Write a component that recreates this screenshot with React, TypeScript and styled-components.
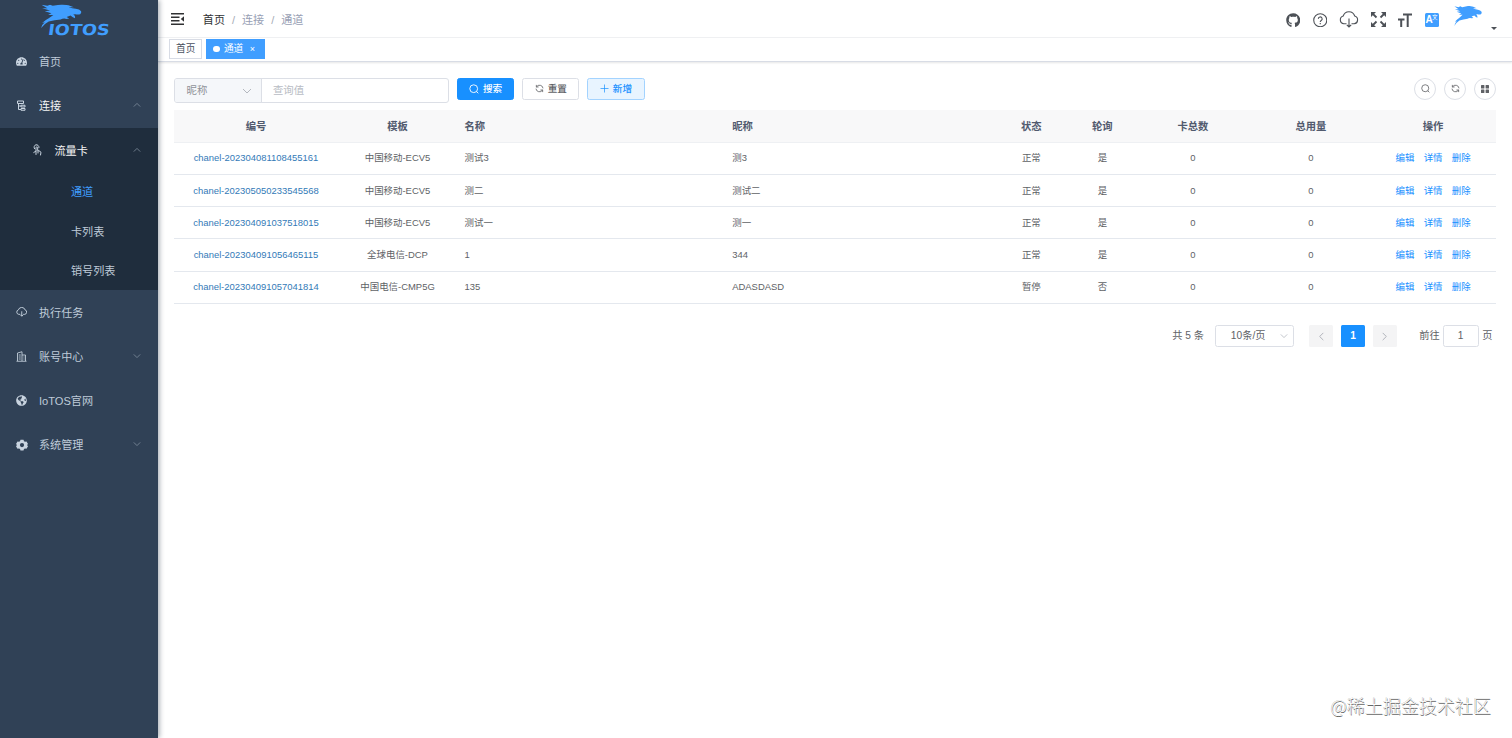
import React from 'react';
import styled, { createGlobalStyle, css } from 'styled-components';
import { FaGithub, FaTachometerAlt, FaGlobeAmericas } from 'react-icons/fa';

const GlobalStyle = createGlobalStyle`
  * { box-sizing: border-box; }
  html, body, #root { height: 100%; }
  body {
    margin: 0;
    overflow: hidden;
    background: #fff;
    color: #606266;
    font-family: "Liberation Sans", "Noto Sans CJK SC", sans-serif;
    font-size: 10.2px;
  }
  svg { display: block; flex: none; }
`;

const Page = styled.div`
  position: relative;
  display: flex;
  width: 100%;
  height: 738px;
`;

const Sidebar = styled.aside`
  position: relative;
  z-index: 1;
  flex: none;
  width: 157.5px;
  background: #304156;
  box-shadow: 1.5px 0 5px rgba(0, 21, 41, 0.35);
`;

const LogoBar = styled.div`
  height: 39.4px;
  padding: 3.5px 0 0 40px;
`;

const itemColor = { normal: '#bfcbd9', open: '#f4f4f5', active: '#409eff' };
type Tone = keyof typeof itemColor;

const MenuItem = styled.div<{ $level?: number; $tone?: Tone }>`
  display: flex;
  align-items: center;
  height: ${p => (p.$level === 2 ? '39.4px' : '44.1px')};
  padding: 1.8px 17px 0 ${p => [15.5, 31, 71][p.$level ?? 0]}px;
  color: ${p => itemColor[p.$tone ?? 'normal']};
  font-size: 11.1px;
  line-height: 16px;
`;

const MenuIcon = styled.span`
  display: flex;
  justify-content: center;
  width: 12px;
  margin: 0 11.5px 1px 0;
  color: #c9d4e0;
`;

const MenuArrow = styled.span`
  margin-left: auto;
  margin-bottom: 2px;
  color: #8290a0;
`;

const SubMenu = styled.div`
  background: #1f2d3d;
`;

const Main = styled.main`
  flex: 1;
  min-width: 0;
  display: flex;
  flex-direction: column;
`;

const Navbar = styled.header`
  display: flex;
  align-items: center;
  flex: none;
  height: 37.5px;
  padding: 2px 15.5px 0 13px;
  border-bottom: 1px solid #f0f1f3;
  color: #4d5157;
`;

const Breadcrumb = styled.nav`
  display: flex;
  margin: 1.4px 0 0 19.3px;
  font-size: 11.1px;
  line-height: 16px;
`;

const Crumb = styled.span<{ $link?: boolean }>`
  color: ${p => (p.$link ? '#303133' : '#97a0b4')};
`;

const Slash = styled.span`
  width: 17px;
  text-align: center;
  color: #a5abb5;
`;

const NavTools = styled.div`
  display: flex;
  align-items: center;
  margin: 1px 0 0 auto;
`;

const Tool = styled.span<{ $w: number }>`
  display: flex;
  justify-content: center;
  width: ${p => p.$w}px;
`;

const LangBadge = styled.span`
  display: flex;
  align-items: center;
  justify-content: center;
  width: 14px;
  height: 14px;
  border-radius: 1.5px;
  background: #409eff;
  color: #fff;
  font: bold 10px/14px "Liberation Sans", sans-serif;
`;

const LangSmall = styled.span`
  margin: -5px 0 0 -0.5px;
  font: 5.5px/8px "Noto Sans CJK SC", sans-serif;
`;

const Avatar = styled.div`
  align-self: flex-start;
  width: 28px;
  margin: 3.5px 0 0 7.5px;
`;

const Caret = styled.span`
  margin: 18px 0 0 9px;
  border: 3.5px solid transparent;
  border-top-color: #4d5157;
  border-bottom: 0;
`;

const TagsBar = styled.div`
  display: flex;
  gap: 4px;
  flex: none;
  height: 24.5px;
  padding: 1px 0 0 11.5px;
  border-bottom: 1px solid #d8dce5;
  box-shadow: 0 1px 2px rgba(0, 0, 0, 0.1);
`;

const Tag = styled.span<{ $active?: boolean }>`
  display: flex;
  align-items: center;
  height: 20.5px;
  padding: 0 6px;
  border: 1px solid ${p => (p.$active ? '#409eff' : '#d8dce5')};
  background: ${p => (p.$active ? '#409eff' : '#fff')};
  color: ${p => (p.$active ? '#fff' : '#495060')};
  font-size: 9.7px;
  line-height: 14px;
`;

const Dot = styled.i`
  width: 6.5px;
  height: 6.5px;
  margin-right: 4px;
  border-radius: 50%;
  background: #fff;
`;

const TagClose = styled.span`
  margin: 1px 3px 0 6.5px;
  font-size: 9px;
`;

const Content = styled.section`
  padding: 15.5px 15.7px 0 16px;
`;

const Toolbar = styled.div`
  display: flex;
  align-items: flex-start;
  height: 32.8px;
`;

const SearchGroup = styled.div`
  display: flex;
  width: 275.5px;
  height: 25px;
  margin-right: 7.8px;
  border: 1px solid #dcdfe6;
  border-radius: 3px;
  line-height: 23px;
`;

const SearchField = styled.div`
  display: flex;
  align-items: center;
  justify-content: space-between;
  width: 87.4px;
  padding: 1px 8.5px 0 12px;
  border-right: 1px solid #dcdfe6;
  border-radius: 2px 0 0 2px;
  background: #f5f7fa;
  color: #909399;
  font-size: 10.4px;

  svg {
    color: #b4b8bf;
  }
`;

const SearchValue = styled.div`
  padding-left: 11px;
  color: #b8bcc4;
  font-size: 10.4px;
`;

const buttonKinds = {
  primary: css`border-color: #1890ff; background: #1890ff; color: #fff;`,
  plain: css`border-color: #dcdfe6; background: #fff; color: #606266;`,
  soft: css`border-color: #a3d3ff; background: #e8f4ff; color: #1890ff;`,
};

const Button = styled.button<{ $kind: keyof typeof buttonKinds }>`
  display: flex;
  align-items: center;
  justify-content: center;
  gap: 4px;
  width: 57.5px;
  height: 22px;
  margin-right: 7.7px;
  padding: 0;
  border: 1px solid;
  border-radius: 2.5px;
  font: 500 9.6px/14px "Liberation Sans", "Noto Sans CJK SC", sans-serif;
  ${p => buttonKinds[p.$kind]}
`;

const RoundButtons = styled.div`
  display: flex;
  gap: 8px;
  margin-left: auto;
`;

const RoundButton = styled.button`
  display: flex;
  align-items: center;
  justify-content: center;
  width: 22px;
  height: 22px;
  padding: 0;
  border: 1px solid #dcdfe6;
  border-radius: 50%;
  background: #fff;
  color: #606266;
`;

const Row = styled.div<{ $head?: boolean }>`
  display: grid;
  grid-template-columns: 165px 118px 267.7px 267.7px 79px 63px 118px 118px 1fr;
  align-items: center;
  height: 32.3px;
  border-bottom: 1px solid #e4e8ee;
  font-size: 9.45px;
  line-height: 18px;
  ${p =>
    p.$head &&
    css`
      padding-top: 1.8px;
      background: #f8f8f9;
      border-bottom-color: #eef0f3;
      color: #515a6e;
      font-size: 10.3px;
      font-weight: 600;
    `}
`;

const Cell = styled.div<{ $left?: boolean }>`
  padding: 0 8px;
  text-align: ${p => (p.$left ? 'left' : 'center')};
  white-space: nowrap;
`;

const IdLink = styled.a`
  color: #337ab7;
`;

const Actions = styled.div`
  display: flex;
  justify-content: center;
  gap: 9.3px;
  color: #1890ff;
`;

const Pagination = styled.div`
  display: flex;
  align-items: center;
  justify-content: flex-end;
  height: 22px;
  margin-top: 21px;
  padding-right: 4px;
  line-height: 20px;
`;

const PageSize = styled.div`
  display: flex;
  align-items: center;
  justify-content: space-between;
  width: 79px;
  height: 22px;
  margin: 0 15px 0 11.5px;
  padding: 0 5px 0 14.5px;
  border: 1px solid #dcdfe6;
  border-radius: 2.5px;

  svg {
    color: #b4b8bf;
  }
`;

const PageButton = styled.span<{ $active?: boolean }>`
  display: flex;
  align-items: center;
  justify-content: center;
  width: 24px;
  height: 22px;
  margin-right: 7.8px;
  border-radius: 1.5px;
  background: ${p => (p.$active ? '#1890ff' : '#f4f4f5')};
  color: ${p => (p.$active ? '#fff' : '#a9adb5')};
  font-weight: 700;
`;

const JumpLabel = styled.span`
  margin-left: 14.5px;
`;

const JumpInput = styled.span`
  width: 36px;
  height: 22px;
  margin: 0 3.5px 0 3px;
  border: 1px solid #dcdfe6;
  border-radius: 2.5px;
  text-align: center;
`;

const Watermark = styled.div`
  position: absolute;
  right: 21px;
  bottom: 19px;
  color: #fff;
  font: 300 18px/28px "Noto Sans CJK SC", sans-serif;
  text-shadow: 0.5px 0.5px 0.6px #666, -0.3px -0.3px 0.6px #999;
`;

const Bird = ({ width, height }: { width: number; height: number }) => (
  <svg width={width} height={height} viewBox="0 0 124 70" preserveAspectRatio="none" fill="#409eff">
    <path d="M2 1 L20 4 L28 1 L36 4 L62 0 Q82 -1 100 8 L84 8 Q96 12 106 13 Q117 14 122 20 Q124 25 119 29 Q112 31 104 29 L98 30 Q106 35 103 41 Q95 38 90 33 L78 37 L86 42 L78 43 Q68 40 60 45 Q42 47 24 51 Q12 57 1 70 Q3 60 12 53 L4 55 Q14 46 24 41 L38 31 L22 31 L32 26 L12 20 L28 18 L4 11 L20 11 Z" />
  </svg>
);

const Chevron = ({ dir = 'down', size = 8 }: { dir?: 'up' | 'down' | 'left' | 'right'; size?: number }) => {
  const d = { up: 'M1 7 L5 3 L9 7', down: 'M1 3 L5 7 L9 3', left: 'M7 1 L3 5 L7 9', right: 'M3 1 L7 5 L3 9' }[dir];
  return (
    <svg width={size} height={size} viewBox="0 0 10 10" fill="none" stroke="currentColor" strokeWidth="1">
      <path d={d} />
    </svg>
  );
};

const Logo = () => (
  <svg width="72" height="34" viewBox="0 0 72 34">
    <g transform="translate(0.8 0.5)"><Bird width={41} height={23.5} /></g>
    <text
      x="0"
      y="0"
      transform="translate(7.5 31.300) skewX(-8)"
      fontFamily="DejaVu Sans, sans-serif"
      fontWeight="700"
      fontSize="15.200"
      textLength="61.500"
      lengthAdjust="spacingAndGlyphs"
      fill="#409eff"
    >
      IOTOS
    </text>
  </svg>
);

const TreeIcon = () => (
  <svg width="11" height="11" viewBox="0 0 22 22" fill="none" stroke="currentColor" strokeWidth="2">
    <path d="M3 2h12v5H3zM10 10.500h8v3.500h-8zM10 17h8v3.500h-8zM5 7v12h5M5 12h5" />
  </svg>
);

const TouchIcon = () => (
  <svg width="10" height="12" viewBox="0 0 20 24" fill="none" stroke="currentColor" strokeWidth="2" strokeLinecap="round" strokeLinejoin="round">
    <path d="M5 9.500A5 5 0 1 1 14 7M8 21V7.500a1.700 1.700 0 0 1 3.400 0V13l4.600 1.500q2 1 1.800 3L17 22M8 14l-4.500 3M12 13.500V18" />
  </svg>
);

const CloudIcon = ({ width, stroke = 1.1 }: { width: number; stroke?: number }) => (
  <svg width={width} height={width * 0.85} viewBox="0 0 20 17" fill="none" stroke="currentColor" strokeWidth={stroke}>
    <path d="M7.500 12.800H4.800A4 4 0 0 1 4.200 5 6 6 0 0 1 15.700 5 4 4 0 0 1 15.200 12.800H12.500M10 7.500V16M7.800 13.800L10 16l2.200-2.200" />
  </svg>
);

const BuildingIcon = () => (
  <svg width="11" height="11" viewBox="0 0 22 22" fill="none" stroke="currentColor" strokeWidth="1.700">
    <path d="M1 20.500h20M3 20V4l9-2.500V20M12 8h7v12M5.500 8h4M5.500 12h4M5.500 16h4M15 12h2M15 16h2" />
  </svg>
);

const GearIcon = () => (
  <svg width="12" height="12" viewBox="0 0 24 24" fill="currentColor" fillRule="evenodd">
    <path d="M9 1.500h6l1 3 2 1.100 3-.600 3 5-2 2.200 2 2.200-3 5-3-.600-2 1.100-1 3H9l-1-3-2-1.100-3 .600-3-5 2-2.200-2-2.200 3-5 3 .600 2-1.100zM12 8a4.200 4.200 0 1 0 0 8.400A4.200 4.200 0 0 0 12 8z" />
  </svg>
);

const FoldIcon = () => (
  <svg width="13" height="12" viewBox="0 0 13 12" fill="#303133">
    <path d="M0 0h13v1.500H0zM0 3.500h8.500V5H0zM0 7h8.500v1.500H0zM0 10.500h13V12H0zM13 3.200v5.600L9.800 6z" />
  </svg>
);

const QuestionIcon = () => (
  <svg width="14.5" height="14.5" viewBox="0 0 16 16" fill="none" stroke="currentColor" strokeWidth="1.200">
    <circle cx="8" cy="8" r="7.200" />
    <path d="M5.900 6.500a2.100 2.100 0 1 1 3.200 1.700Q8 8.800 8 9.900M8 11v1.300" />
  </svg>
);

const FullscreenIcon = () => (
  <svg width="15" height="15" viewBox="0 0 15 15" fill="currentColor" stroke="currentColor">
    <path d="M1.500 1.500l4 4M13.500 1.500l-4 4M1.500 13.500l4-4M13.500 13.500l-4-4" strokeWidth="1.800" />
    <path d="M0 0h5L0 5zM15 0v5L10 0zM0 15v-5l5 5zM15 15h-5l5-5z" stroke="none" />
  </svg>
);

const FontSizeIcon = () => (
  <svg width="14" height="14" viewBox="0 0 14 14" fill="none" stroke="currentColor" strokeWidth="2">
    <path d="M5 1.500H14M9.700 1.500V14M0 6.500H6.500M3.200 6.500V14" />
  </svg>
);

const SearchIcon = ({ size = 10 }: { size?: number }) => (
  <svg width={size} height={size} viewBox="0 0 10 10" fill="none" stroke="currentColor" strokeWidth="0.900">
    <circle cx="4.700" cy="4.700" r="3.900" />
    <path d="M7.500 7.500L9.300 9.300" />
  </svg>
);

const RefreshIcon = () => (
  <svg width="9" height="9" viewBox="0 0 10 10" fill="none" stroke="currentColor" strokeWidth="0.900">
    <path d="M1.500 3.500V1M1.500 3.300H4M1.700 3.200A3.900 3.900 0 0 1 8.900 4.800M8.500 6.500V9M8.500 6.700H6M8.300 6.800A3.900 3.900 0 0 1 1.100 5.200" />
  </svg>
);

const PlusIcon = () => (
  <svg width="9" height="9" viewBox="0 0 9 9" stroke="currentColor" strokeWidth="0.700">
    <path d="M4.500 0.500v8M0.500 4.500h8" />
  </svg>
);

const GridIcon = () => (
  <svg width="8" height="8" viewBox="0 0 8 8" fill="currentColor">
    <rect width="3.400" height="3.400" rx="0.500" />
    <rect x="4.600" width="3.400" height="3.400" rx="0.500" />
    <rect y="4.600" width="3.400" height="3.400" rx="0.500" />
    <rect x="4.600" y="4.600" width="3.400" height="3.400" rx="0.500" />
  </svg>
);

const columns = ['编号', '模板', '名称', '昵称', '状态', '轮询', '卡总数', '总用量', '操作'];
const isLeft = (i: number) => i === 2 || i === 3;

const channels = [
  ['chanel-202304081108455161', '中国移动-ECV5', '测试3', '测3', '正常', '是', '0', '0'],
  ['chanel-202305050233545568', '中国移动-ECV5', '测二', '测试二', '正常', '是', '0', '0'],
  ['chanel-202304091037518015', '中国移动-ECV5', '测试一', '测一', '正常', '是', '0', '0'],
  ['chanel-202304091056465115', '全球电信-DCP', '1', '344', '正常', '是', '0', '0'],
  ['chanel-202304091057041814', '中国电信-CMP5G', '135', 'ADASDASD', '暂停', '否', '0', '0'],
];

export default function App() {
  return (
    <Page>
      <GlobalStyle />
      <Sidebar>
        <LogoBar><Logo /></LogoBar>
        <MenuItem><MenuIcon><FaTachometerAlt size={11} /></MenuIcon>首页</MenuItem>
        <MenuItem $tone="open">
          <MenuIcon><TreeIcon /></MenuIcon>连接<MenuArrow><Chevron dir="up" /></MenuArrow>
        </MenuItem>
        <SubMenu>
          <MenuItem $level={1} $tone="open">
            <MenuIcon><TouchIcon /></MenuIcon>流量卡<MenuArrow><Chevron dir="up" /></MenuArrow>
          </MenuItem>
          <MenuItem $level={2} $tone="active">通道</MenuItem>
          <MenuItem $level={2}>卡列表</MenuItem>
          <MenuItem $level={2}>销号列表</MenuItem>
        </SubMenu>
        <MenuItem><MenuIcon><CloudIcon width={11.5} stroke={1.6} /></MenuIcon>执行任务</MenuItem>
        <MenuItem>
          <MenuIcon><BuildingIcon /></MenuIcon>账号中心<MenuArrow><Chevron /></MenuArrow>
        </MenuItem>
        <MenuItem><MenuIcon><FaGlobeAmericas size={11} /></MenuIcon>IoTOS官网</MenuItem>
        <MenuItem>
          <MenuIcon><GearIcon /></MenuIcon>系统管理<MenuArrow><Chevron /></MenuArrow>
        </MenuItem>
      </Sidebar>

      <Main>
        <Navbar>
          <FoldIcon />
          <Breadcrumb>
            <Crumb $link>首页</Crumb><Slash>/</Slash>
            <Crumb>连接</Crumb><Slash>/</Slash>
            <Crumb>通道</Crumb>
          </Breadcrumb>
          <NavTools>
            <Tool $w={26}><FaGithub size={14.5} /></Tool>
            <Tool $w={28}><QuestionIcon /></Tool>
            <Tool $w={30}><CloudIcon width={20} /></Tool>
            <Tool $w={28}><FullscreenIcon /></Tool>
            <Tool $w={25}><FontSizeIcon /></Tool>
            <Tool $w={29}><LangBadge>A<LangSmall>文</LangSmall></LangBadge></Tool>
          </NavTools>
          <Avatar><Bird width={28} height={20} /></Avatar>
          <Caret />
        </Navbar>
        <TagsBar>
          <Tag>首页</Tag>
          <Tag $active><Dot />通道<TagClose>×</TagClose></Tag>
        </TagsBar>

        <Content>
          <Toolbar>
            <SearchGroup>
              <SearchField>昵称<Chevron size={10} /></SearchField>
              <SearchValue>查询值</SearchValue>
            </SearchGroup>
            <Button $kind="primary"><SearchIcon />搜索</Button>
            <Button $kind="plain"><RefreshIcon />重置</Button>
            <Button $kind="soft"><PlusIcon />新增</Button>
            <RoundButtons>
              <RoundButton><SearchIcon size={9} /></RoundButton>
              <RoundButton><RefreshIcon /></RoundButton>
              <RoundButton><GridIcon /></RoundButton>
            </RoundButtons>
          </Toolbar>

          <Row $head>
            {columns.map((name, i) => <Cell key={name} $left={isLeft(i)}>{name}</Cell>)}
          </Row>
          {channels.map(row => (
            <Row key={row[0]}>
              {row.map((value, i) => (
                <Cell key={i} $left={isLeft(i)}>{i === 0 ? <IdLink>{value}</IdLink> : value}</Cell>
              ))}
              <Actions><span>编辑</span><span>详情</span><span>删除</span></Actions>
            </Row>
          ))}

          <Pagination>
            <span>共 5 条</span>
            <PageSize>10条/页<Chevron size={8} /></PageSize>
            <PageButton><Chevron dir="left" size={9} /></PageButton>
            <PageButton $active>1</PageButton>
            <PageButton><Chevron dir="right" size={9} /></PageButton>
            <JumpLabel>前往</JumpLabel>
            <JumpInput>1</JumpInput>
            <span>页</span>
          </Pagination>
        </Content>
      </Main>
      <Watermark>@稀土掘金技术社区</Watermark>
    </Page>
  );
}
